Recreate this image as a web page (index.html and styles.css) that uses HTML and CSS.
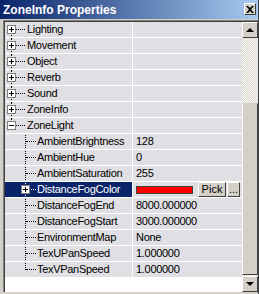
FILE: index.html
```html
<!DOCTYPE html>
<html lang="en">
<head>
    <meta charset="UTF-8">
    <title>ZoneInfo Properties</title>
    <link rel="stylesheet" href="styles.css">
</head>
<body>
    <div class="window">
        <div class="titlebar">
            <div class="title">ZoneInfo Properties</div>
            <div class="close-btn">
                <svg width="8" height="7" viewBox="0 0 8 7"><path d="M0 0h2l2 2 2-2h2L5 3.5 8 7H6L4 5 2 7H0l3-3.5z" fill="#000"/></svg>
            </div>
        </div>
        <div class="frame">
            <div class="list">
                <div class="rows">
                    <div class="row top"><div class="name"><span class="box plus"></span>Lighting</div><div class="value"></div></div>
                    <div class="row top"><div class="name"><span class="box plus"></span>Movement</div><div class="value"></div></div>
                    <div class="row top"><div class="name"><span class="box plus"></span>Object</div><div class="value"></div></div>
                    <div class="row top"><div class="name"><span class="box plus"></span>Reverb</div><div class="value"></div></div>
                    <div class="row top"><div class="name"><span class="box plus"></span>Sound</div><div class="value"></div></div>
                    <div class="row top"><div class="name"><span class="box plus"></span>ZoneInfo</div><div class="value"></div></div>
                    <div class="row top last"><div class="name"><span class="box minus"></span>ZoneLight</div><div class="value"></div></div>
                    <div class="row child"><div class="name">AmbientBrightness</div><div class="value">128</div></div>
                    <div class="row child"><div class="name">AmbientHue</div><div class="value">0</div></div>
                    <div class="row child"><div class="name">AmbientSaturation</div><div class="value">255</div></div>
                    <div class="row child selected"><div class="name"><span class="box plus"></span>DistanceFogColor</div>
                        <div class="value color-value">
                            <span class="swatch"></span>
                            <span class="btn pick">Pick</span>
                            <span class="btn dots">...</span>
                        </div>
                    </div>
                    <div class="row child"><div class="name">DistanceFogEnd</div><div class="value">8000.000000</div></div>
                    <div class="row child"><div class="name">DistanceFogStart</div><div class="value">3000.000000</div></div>
                    <div class="row child"><div class="name">EnvironmentMap</div><div class="value">None</div></div>
                    <div class="row child"><div class="name">TexUPanSpeed</div><div class="value">1.000000</div></div>
                    <div class="row child last"><div class="name">TexVPanSpeed</div><div class="value">1.000000</div></div>
                </div>
                <div class="scrollbar">
                    <div class="arrow-btn"><span class="tri up"></span></div>
                    <div class="track track-top"></div>
                    <div class="thumb"></div>
                    <div class="arrow-btn"><span class="tri down"></span></div>
                </div>
            </div>
        </div>
    </div>
</body>
</html>
```
FILE: styles.css
```css
body {
    margin: 0;
    padding: 0;
    background-color: #d4d0c8;
    font-family: "Liberation Sans", Arial, sans-serif;
}
.window {
    width: 259px;
    height: 294px;
    background-color: #d4d0c8;
    border-right: 1px solid #404040;
    box-sizing: border-box;
}
.titlebar {
    height: 19px;
    display: flex;
    align-items: center;
    justify-content: space-between;
    background: linear-gradient(to right, #0a246a, #a6caf0);
    padding: 0 1px 0 3px;
}
.title {
    color: white;
    font-size: 12px;
    font-weight: bold;
}
.close-btn {
    width: 10px;
    height: 10px;
    margin-right: 1px;
    margin-top: -1px;
    background-color: #d4d0c8;
    border: 1px solid;
    border-color: #fff #404040 #404040 #fff;
    display: flex;
    align-items: center;
    justify-content: center;
}
.frame {
    padding: 1px 0 0 3px;
}
.list {
    display: flex;
    height: 271px;
    border-top: 1px solid #808080;
    border-left: 1px solid #808080;
    background-color: white;
}
.list .rows {
    flex: 1;
    border-top: 1px solid #404040;
    border-left: 1px solid #404040;
}
.row {
    display: flex;
    height: 15px;
    border-bottom: 1px solid white;
    font-size: 11px;
    letter-spacing: -0.3px;
    line-height: 15px;
    color: #000;
}
.row .name {
    position: relative;
    width: 127px;
    background-color: #e0dfe3;
    box-sizing: border-box;
    white-space: nowrap;
    overflow: hidden;
}
.row .value {
    flex: 1;
    background-color: #e0dfe3;
    border-left: 1px solid white;
    padding-left: 3px;
}
.row.top .name {
    padding-left: 22px;
}
.row.child .name {
    padding-left: 32px;
}

/* tree lines */
.row .name::before,
.row .name::after {
    content: "";
    position: absolute;
}
.row.top .name::before {
    left: 6px;
    top: 0;
    height: 16px;
    border-left: 1px dotted #000;
}
.row.top:first-child .name::before {
    top: 4px;
}
.row.top.last .name::before {
    height: 8px;
}
.row.top .name::after {
    left: 7px;
    top: 7px;
    width: 13px;
    border-top: 1px dotted #000;
}
.row.child .name::before {
    left: 20px;
    top: -1px;
    height: 17px;
    border-left: 1px dotted #000;
}
.row.child.last .name::before {
    height: 9px;
}
.row.child .name::after {
    left: 21px;
    top: 7px;
    width: 10px;
    border-top: 1px dotted #000;
}
.row.child.first .name::before {
    top: 0;
}

.box {
    position: absolute;
    top: 3px;
    left: 2px;
    width: 7px;
    height: 7px;
    border: 1px solid #808080;
    background-color: white;
    z-index: 1;
}
.box::before,
.box::after {
    content: "";
    position: absolute;
    background-color: #000;
}
.box::before {
    left: 1px;
    top: 3px;
    width: 5px;
    height: 1px;
}
.box.plus::after {
    left: 3px;
    top: 1px;
    width: 1px;
    height: 5px;
}
.row.child .box {
    left: 16px;
}

.row.selected .name {
    background-color: #0a246a;
    color: white;
}
.row.selected .name::before,
.row.selected .name::after {
    border-color: white;
}
.color-value {
    display: flex;
    align-items: center;
    gap: 1px;
}
.swatch {
    width: 55px;
    height: 6px;
    background-color: #ff0000;
    border: 1px solid #404040;
    margin-right: 4px;
}
.btn {
    height: 13px;
    line-height: 13px;
    background-color: #d4d0c8;
    border: 1px solid;
    border-color: #fff #404040 #404040 #fff;
    text-align: center;
    letter-spacing: 0;
}
.pick {
    width: 26px;
}
.dots {
    width: 11px;
}

/* scrollbar */
.scrollbar {
    width: 16px;
    display: flex;
    flex-direction: column;
    border-top: 1px solid #404040;
    background-color: #eeede9;
    background-image: repeating-conic-gradient(#d4d0c8 0 25%, #fff 0 50%);
    background-size: 2px 2px;
}
.arrow-btn {
    height: 14px;
    background-color: #d4d0c8;
    border: 1px solid;
    border-color: #fff #404040 #404040 #fff;
    display: flex;
    align-items: center;
    justify-content: center;
}
.tri {
    width: 0;
    height: 0;
    border-left: 4px solid transparent;
    border-right: 4px solid transparent;
}
.tri.up {
    border-bottom: 4px solid #000;
}
.tri.down {
    border-top: 4px solid #000;
}
.track-top {
    height: 65px;
}
.thumb {
    height: 171px;
    background-color: #d4d0c8;
    border: 1px solid;
    border-color: #d4d0c8 #404040 #404040 #fff;
    margin-bottom: 1px;
}
```
